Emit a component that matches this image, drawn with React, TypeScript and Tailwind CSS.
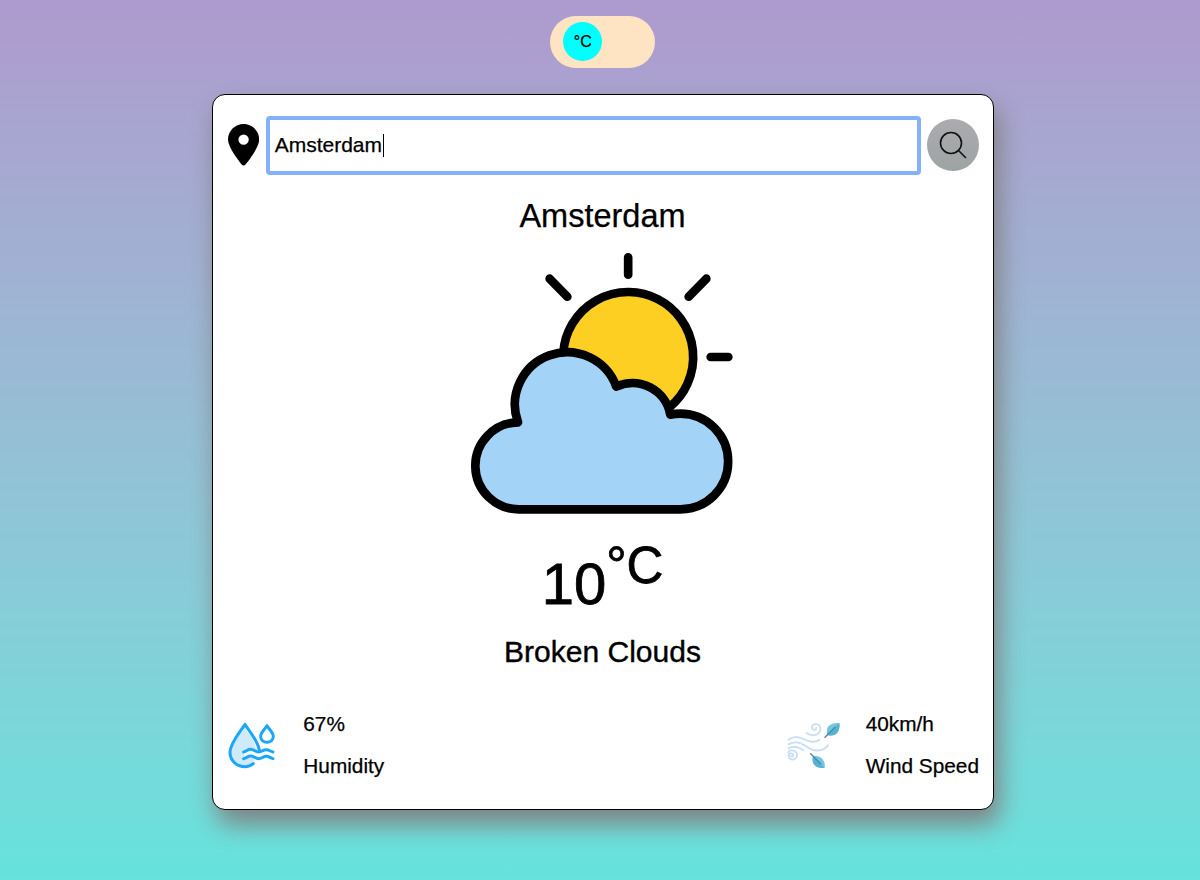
import React from "react";
import { FaLocationDot } from "react-icons/fa6";

function CloudSunIcon() {
  return (
    <svg viewBox="37 39 783 783" className="mt-[18px] size-[261px] overflow-visible" stroke="#000" strokeWidth="26" strokeLinecap="round" strokeLinejoin="round">
      <path d="M311 338A195 195 0 1 1 629 502L500 560Z" fill="#fdcf22" />
      <path
        d="M180 808H662A143.500 143.500 0 0 0 662 521Q647 521 632 524A115 115 0 0 0 470 440A156 156 0 0 0 175 547A130.500 130.500 0 0 0 180 808Z"
        fill="#a3d3f7"
      />
      <path d="M505.500 52V104M270 116L323 170M740 116L687 170M753 351H806" fill="none" />
    </svg>
  );
}

function HumidityIcon() {
  return (
    <svg viewBox="40 66 142 141" className="mt-[2px] h-[47px] w-[47.3px]" fill="none" stroke="#1aa7fa" strokeWidth="9" strokeLinecap="round" strokeLinejoin="round">
      <path d="M91 73C76 96 46 130 46 157C46 182 66 200 91 200C101 200 109 197 116 192L120 174L88 174L88 154L134 150C128 122 105 94 91 73Z" fill="#cfe9fd" stroke="none" />
      <path d="M96 88Q120 116 126 143" stroke="#fff" strokeWidth="6" />
      <path d="M134 149C128 121 105 94 91 73C76 96 46 130 46 157C46 182 66 200 91 200Q105 200 116 191" />
      <path d="M157 77C151 87 138 98 138 109C138 120 146 127 157 127C168 127 176 120 176 109C176 98 163 87 157 77Z" />
      <path d="M87 156C97 154 98 148 108 148C119 148 121 156 132 156C143 156 144 149 155 149C164 149 166 154 175 156" />
      <path d="M87 176C97 174 98 168 108 168C119 168 121 176 132 176C143 176 144 169 155 169C164 169 166 174 175 176" />
    </svg>
  );
}

function WindIcon() {
  return (
    <svg viewBox="37 66 160 141" className="mt-[2px] h-[47px] w-[53.300px]" fill="none" strokeLinecap="round">
      <g stroke="#c9def5" strokeWidth="5.500">
        <path d="M96 99C109 110 137 108 137 86C137 69 112 68 112 82C112 91 125 92 125 84" />
        <path d="M41 119C62 104 79 114 96 121C111 127 124 127 134 119" />
        <path d="M41 133C67 119 83 132 101 143C121 156 146 154 160 136" />
        <path d="M41 145C57 136 73 141 86 151" />
        <path d="M41 158C43 146 67 151 67 165C67 182 42 183 42 168C42 158 56 158 56 166C56 171 50 171 49 168" />
      </g>
      <path d="M158 105C151 82 166 67 194 69C198 91 185 113 158 105Z" fill="#70c7de" />
      <path d="M158 105L194 69C198 91 185 113 158 105Z" fill="#58b3d2" />
      <path d="M151 112L181 82" stroke="#4f83ad" strokeWidth="4" />
      <path d="M115 169C133 163 154 178 150 203C127 207 109 195 115 169Z" fill="#70c7de" />
      <path d="M115 169L150 203C127 207 109 195 115 169Z" fill="#58b3d2" />
      <path d="M108 161L138 191" stroke="#4f83ad" strokeWidth="4" />
    </svg>
  );
}

function UnitToggle() {
  return (
    <button className="mt-[15.500px] flex h-[52px] w-[104.500px] shrink-0 items-center rounded-full bg-[#ffe4c4] pl-[13px]">
      <span className="flex size-[39px] items-center justify-center rounded-full bg-[#00ffff] text-[16px] leading-none">°C</span>
    </button>
  );
}

function SearchBar() {
  return (
    <div className="flex h-[60px] w-full items-center">
      <FaLocationDot className="h-[41.600px] w-[31.200px] shrink-0" />
      <div className="ml-[7px] flex h-[59px] w-[655px] shrink-0 items-center rounded-[4px] border-4 border-[#85b1fb] pl-[4.500px] text-[21px]">
        <span>Amsterdam</span>
        <span className="ml-px h-[23px] w-px bg-black" />
      </div>
      <button className="ml-[5.700px] flex size-[52px] shrink-0 items-center justify-center rounded-full bg-linear-to-b from-[#acabaf] to-[#9da3a3]">
        <svg viewBox="0 0 28 28" className="size-[28px]" fill="none" stroke="#111" strokeWidth="1.600" strokeLinecap="round">
          <circle cx="12" cy="12" r="10.500" />
          <path d="M19.500 19.500L26.500 26.500" />
        </svg>
      </button>
    </div>
  );
}

function Stat({ icon, value, label, gap }: { icon: React.ReactNode; value: string; label: string; gap: string }) {
  return (
    <div className={`flex items-center ${gap}`}>
      {icon}
      <div className="flex flex-col gap-[17.600px] text-[20.800px] leading-[24px]">
        <span>{value}</span>
        <span>{label}</span>
      </div>
    </div>
  );
}

export default function App() {
  return (
    <main className="flex h-[880px] flex-col items-center overflow-hidden bg-linear-to-b from-[#ae9ace] to-[#65e3dc] pl-[5px] font-['Liberation_Sans',Arial,sans-serif] text-black [-webkit-text-stroke:0.25px_black]">
      <UnitToggle />
      <section className="mt-[26.700px] flex h-[716px] w-[782px] shrink-0 flex-col items-center rounded-[13px] border-[1.300px] border-black bg-white px-[15.500px] pt-[20px] shadow-[5px_14px_26px_rgba(128,128,128,1)]">
        <SearchBar />
        <h1 className="mt-[22px] text-[32.500px] leading-[38px]">Amsterdam</h1>
        <CloudSunIcon />
        <div className="mt-[28px] flex h-[68px] items-start leading-none [-webkit-text-stroke:0.8px_black]">
          <span className="mt-[12.500px] text-[58px]">10</span>
          <span className="-mt-[2px] text-[51px]">°C</span>
        </div>
        <p className="mt-[25px] text-[30px] leading-[34px] [-webkit-text-stroke:0.4px_black]">Broken Clouds</p>
        <div className="-mr-[2px] mt-[43px] flex w-[751px] items-center justify-between self-end">
          <Stat icon={<HumidityIcon />} value="67%" label="Humidity" gap="gap-[28px]" />
          <Stat icon={<WindIcon />} value="40km/h" label="Wind Speed" gap="gap-[25px]" />
        </div>
      </section>
    </main>
  );
}
